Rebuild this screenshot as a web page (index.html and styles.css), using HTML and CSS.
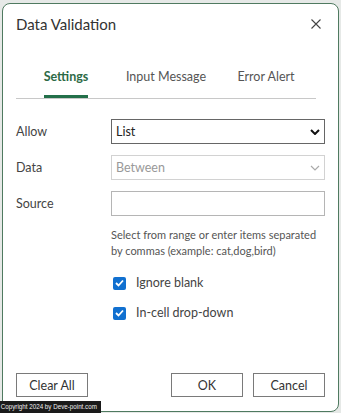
FILE: index.html
```html
<!DOCTYPE html>
<html lang="en">
<head>
    <meta charset="UTF-8">
    <meta name="viewport" content="width=device-width, initial-scale=1.0">
    <title>Data Validation</title>
    <link rel="stylesheet" href="styles.css">
</head>
<body>
    <div class="dialog">
        <div class="dialog-header">
            <h2 class="dialog-title">Data Validation</h2>
            <button class="close-btn" aria-label="Close">
                <svg width="10" height="10" viewBox="0 0 10 10"><path d="M0.5 0.5 L9.5 9.5 M9.5 0.5 L0.5 9.5" stroke="#444" stroke-width="1.1" fill="none"/></svg>
            </button>
        </div>

        <div class="tabs">
            <div class="tab active"><span>Settings</span></div>
            <div class="tab"><span>Input Message</span></div>
            <div class="tab"><span>Error Alert</span></div>
        </div>

        <div class="form">
            <div class="row">
                <label class="field-label">Allow</label>
                <div class="select">
                    <span>List</span>
                    <svg width="10" height="6" viewBox="0 0 10 6"><path d="M1 1 L5 5 L9 1" stroke="#111" stroke-width="2" fill="none"/></svg>
                </div>
            </div>
            <div class="row">
                <label class="field-label">Data</label>
                <div class="select disabled">
                    <span>Between</span>
                    <svg width="10" height="6" viewBox="0 0 10 6"><path d="M1 1 L5 5 L9 1" stroke="#aaa" stroke-width="1.2" fill="none"/></svg>
                </div>
            </div>
            <div class="row">
                <label class="field-label">Source</label>
                <div class="input"></div>
            </div>

            <p class="hint">Select from range or enter items separated<br>by commas (example: cat,dog,bird)</p>

            <label class="check">
                <span class="box"><svg width="9" height="8" viewBox="0 0 9 8"><path d="M1 4 L3.5 6.5 L8 1.5" stroke="#fff" stroke-width="1.8" fill="none"/></svg></span>
                Ignore blank
            </label>
            <label class="check">
                <span class="box"><svg width="9" height="8" viewBox="0 0 9 8"><path d="M1 4 L3.5 6.5 L8 1.5" stroke="#fff" stroke-width="1.8" fill="none"/></svg></span>
                In-cell drop-down
            </label>
        </div>

        <div class="footer">
            <button class="btn">Clear All</button>
            <div class="spacer"></div>
            <button class="btn">OK</button>
            <button class="btn">Cancel</button>
        </div>
    </div>

    <div class="copyright"><span>Copyright 2024 by Deve-point.com</span></div>
</body>
</html>
```

FILE: styles.css
```css
body {
    margin: 0;
    width: 341px;
    height: 413px;
    overflow: hidden;
    background: #e6e9e7;
    font-family: Lato, "Open Sans", sans-serif;
    color: #333;
    position: relative;
}

.dialog {
    box-sizing: border-box;
    width: 337px;
    height: 409px;
    margin: 3px 0 0 2px;
    padding: 9px 13px 14px 13px;
    background: #fff;
    border: 1px solid #4f7a60;
    border-radius: 8px;
    display: flex;
    flex-direction: column;
}

.dialog-header {
    display: flex;
    align-items: center;
    justify-content: space-between;
    padding-right: 4px;
}

.dialog-title {
    margin: 0;
    font-size: 15px;
    font-weight: normal;
    line-height: 22px;
    color: #333;
}

.close-btn {
    border: none;
    background: none;
    padding: 0;
    width: 10px;
    height: 10px;
    display: flex;
}

.tabs {
    display: flex;
    width: 300px;
    margin-top: 33px;
    border-bottom: 1px solid #c8c8c8;
}

.tab {
    flex: 1;
    text-align: center;
    font-size: 12.5px;
    line-height: 18px;
    color: #555;
}

.tab span {
    display: inline-block;
    padding-bottom: 9px;
    border-bottom: 3px solid transparent;
}

.tab.active span {
    color: #2d6a46;
    font-weight: bold;
    border-bottom-color: #23704a;
}

.form {
    margin-top: 20px;
    display: flex;
    flex-direction: column;
}

.row {
    display: flex;
    align-items: center;
    margin-bottom: 11px;
}

.field-label {
    width: 95px;
    font-size: 12.5px;
    color: #444;
}

.select,
.input {
    box-sizing: border-box;
    width: 214px;
    height: 25px;
    border: 1px solid #666;
    display: flex;
    align-items: center;
    justify-content: space-between;
    padding: 0 4px 0 4px;
    font-size: 12.5px;
    color: #222;
}

.select.disabled {
    border-color: #d2d2d2;
    color: #999;
}

.input {
    border-color: #b5b5b5;
}

.hint {
    margin: 0 0 0 95px;
    font-size: 11px;
    line-height: 16px;
    color: #555;
    white-space: nowrap;
}

.check {
    display: flex;
    align-items: center;
    margin: 15px 0 0 97px;
    font-size: 12.5px;
    line-height: 18px;
    color: #444;
}

.check + .check {
    margin-top: 12px;
}

.box {
    width: 13px;
    height: 13px;
    border-radius: 2px;
    background: #1170d0;
    display: flex;
    align-items: center;
    justify-content: center;
    margin-right: 10px;
}

.footer {
    margin-top: auto;
    display: flex;
    gap: 10px;
}

.spacer {
    flex: 1;
}

.btn {
    box-sizing: border-box;
    width: 72px;
    height: 24px;
    border: 1px solid #7a7a7a;
    background: #fff;
    font-family: inherit;
    font-size: 12.5px;
    color: #333;
    padding: 0;
}

.copyright {
    position: absolute;
    left: 0;
    bottom: 0;
    width: 101px;
    height: 12px;
    background: #1a1a1a;
    color: #eee;
    font-family: "Liberation Sans", sans-serif;
    font-size: 8px;
    line-height: 12px;
    white-space: nowrap;
}

.copyright span {
    display: inline-block;
    transform: scaleX(0.78);
    transform-origin: left center;
    padding-left: 1px;
}
```
